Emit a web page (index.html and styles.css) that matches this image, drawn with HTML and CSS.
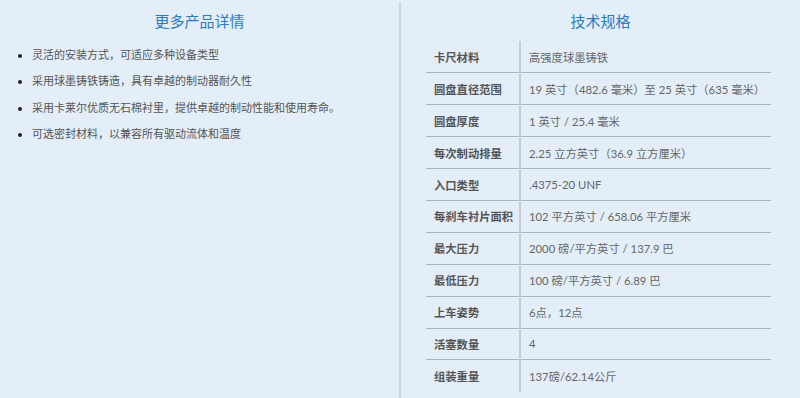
FILE: index.html
```html
<!DOCTYPE html>
<html lang="zh">
<head>
<meta charset="utf-8">
<link rel="stylesheet" href="styles.css">
</head>
<body>
<div class="page">
  <section class="details">
    <h2 class="title">更多产品详情</h2>
    <ul class="list">
      <li>灵活的安装方式，可适应多种设备类型</li>
      <li>采用球墨铸铁铸造，具有卓越的制动器耐久性</li>
      <li>采用卡莱尔优质无石棉衬里，提供卓越的制动性能和使用寿命。</li>
      <li>可选密封材料，以兼容所有驱动流体和温度</li>
    </ul>
  </section>
  <div class="divider"></div>
  <section class="specs">
    <h2 class="title">技术规格</h2>
    <table class="table">
      <tr><th>卡尺材料</th><td>高强度球墨铸铁</td></tr>
      <tr><th>圆盘直径范围</th><td>19 英寸（482.6 毫米）至 25 英寸（635 毫米）</td></tr>
      <tr><th>圆盘厚度</th><td>1 英寸 / 25.4 毫米</td></tr>
      <tr><th>每次制动排量</th><td>2.25 立方英寸（36.9 立方厘米）</td></tr>
      <tr><th>入口类型</th><td>.4375-20 UNF</td></tr>
      <tr><th>每刹车衬片面积</th><td>102 平方英寸 / 658.06 平方厘米</td></tr>
      <tr><th>最大压力</th><td>2000 磅/平方英寸 / 137.9 巴</td></tr>
      <tr><th>最低压力</th><td>100 磅/平方英寸 / 6.89 巴</td></tr>
      <tr><th>上车姿势</th><td>6点，12点</td></tr>
      <tr><th>活塞数量</th><td>4</td></tr>
      <tr><th>组装重量</th><td>137磅/62.14公斤</td></tr>
    </table>
  </section>
</div>
</body>
</html>
```
FILE: styles.css
```css
html, body {
  margin: 0;
  padding: 0;
  background: #e3eef8;
}
body {
  font-family: Lato, "Noto Sans CJK SC", sans-serif;
  color: #555;
  width: 800px;
  height: 398px;
  overflow: hidden;
}
.page {
  display: grid;
  grid-template-columns: 399px 2px 1fr;
  height: 398px;
}
.divider {
  background: #c9d4de;
  margin-top: 2px;
}
.title {
  margin: 0;
  padding-top: 10px;
  height: 33px;
  box-sizing: border-box;
  text-align: center;
  font-size: 15px;
  font-weight: normal;
  line-height: 22px;
  color: #2a7ac6;
}
.list {
  margin: 0;
  padding: 14px 0 0 32px;
  list-style: disc;
  font-size: 11px;
  line-height: 16px;
  color: #555;
}
.list li {
  margin-bottom: 10.3px;
}
.list li::marker {
  color: #222;
  font-size: 11px;
}
.table {
  margin: 8px 0 0 25px;
  width: 345px;
  border-collapse: collapse;
  font-size: 11.3px;
}
.table tr {
  height: 31.9px;
}
.table tr + tr th,
.table tr + tr td {
  border-top: 1px solid #a9b5c1;
}
.table th {
  width: 94px;
  box-sizing: border-box;
  padding: 0 0 0 8px;
  text-align: left;
  font-weight: bold;
  color: #555;
  border-right: 2px solid #c3ced8;
  white-space: nowrap;
}
.table td {
  padding: 0 0 0 8px;
  color: #666;
  white-space: nowrap;
}
```
